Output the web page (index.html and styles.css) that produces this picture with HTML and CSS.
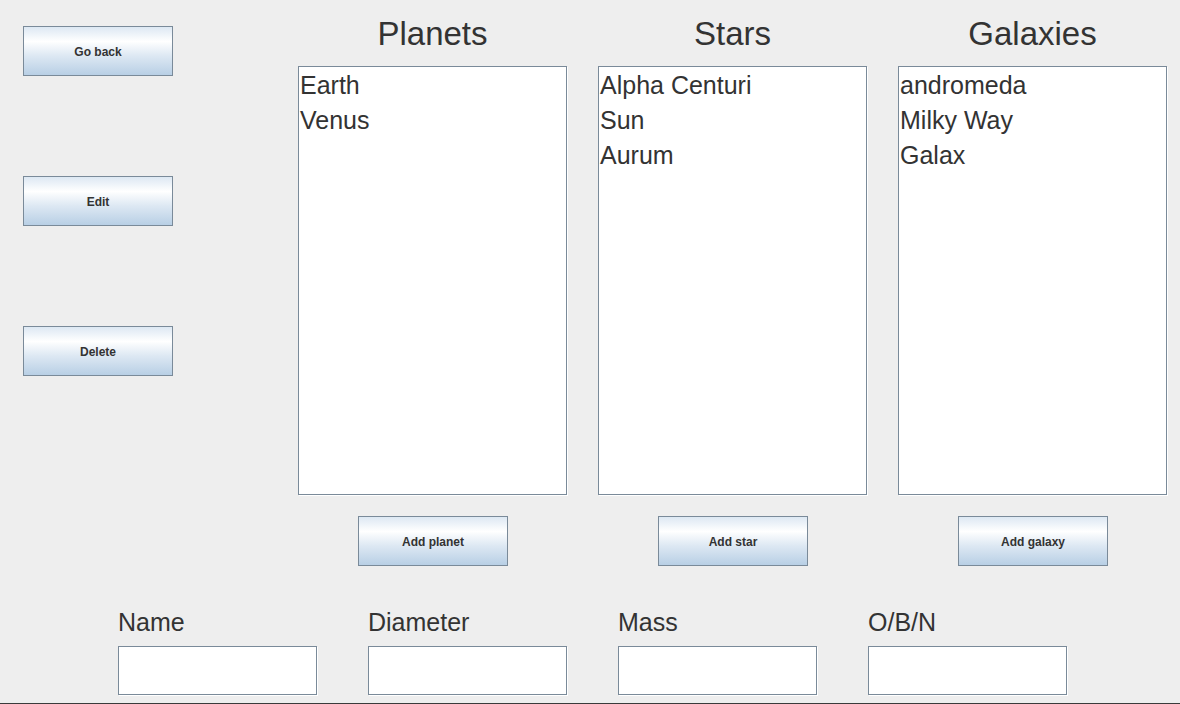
FILE: index.html
```html
<!DOCTYPE html>
<html>
<head>
<meta charset="utf-8">
<link rel="stylesheet" href="styles.css">
</head>
<body>
<div class="app">
  <div class="top">
    <div class="sidebar">
      <button class="btn">Go back</button>
      <button class="btn">Edit</button>
      <button class="btn">Delete</button>
    </div>
    <div class="columns">
      <div class="column">
        <h2 class="heading">Planets</h2>
        <ul class="list">
          <li>Earth</li>
          <li>Venus</li>
        </ul>
        <button class="btn add">Add planet</button>
      </div>
      <div class="column">
        <h2 class="heading">Stars</h2>
        <ul class="list">
          <li>Alpha Centuri</li>
          <li>Sun</li>
          <li>Aurum</li>
        </ul>
        <button class="btn add">Add star</button>
      </div>
      <div class="column">
        <h2 class="heading">Galaxies</h2>
        <ul class="list">
          <li>andromeda</li>
          <li>Milky Way</li>
          <li>Galax</li>
        </ul>
        <button class="btn add">Add galaxy</button>
      </div>
    </div>
  </div>
  <div class="fields">
    <label class="field"><span class="label">Name</span><input class="input" type="text"></label>
    <label class="field"><span class="label">Diameter</span><input class="input" type="text"></label>
    <label class="field"><span class="label">Mass</span><input class="input" type="text"></label>
    <label class="field"><span class="label">O/B/N</span><input class="input" type="text"></label>
  </div>
</div>
</body>
</html>
```
FILE: styles.css
```css
html, body {
  margin: 0;
  padding: 0;
  background: #eeeeee;
}
body {
  font-family: "Liberation Sans", Arial, sans-serif;
  color: #333333;
}
.app {
  box-sizing: border-box;
  width: 1180px;
  height: 704px;
  border-bottom: 1px solid #3a3a3a;
  overflow: hidden;
}
.top {
  display: flex;
}
.sidebar {
  width: 275px;
  padding-left: 23px;
  padding-top: 26px;
  display: flex;
  flex-direction: column;
  align-items: flex-start;
  gap: 100px;
}
.btn {
  box-sizing: border-box;
  width: 150px;
  height: 50px;
  margin: 0;
  padding: 2px 0 0;
  border: 1px solid #7a8a99;
  background: linear-gradient(to bottom, #dde8f3 0%, #ffffff 30%, #dde8f3 60%, #b8cfe5 100%);
  font-family: "Liberation Sans", Arial, sans-serif;
  font-weight: bold;
  font-size: 12px;
  color: #333333;
}
.columns {
  display: flex;
  gap: 31px;
}
.column {
  width: 269px;
  display: flex;
  flex-direction: column;
  align-items: center;
}
.heading {
  margin: 18px 0 0;
  height: 32px;
  line-height: 32px;
  font-size: 33px;
  font-weight: normal;
  text-align: center;
}
.list {
  box-sizing: border-box;
  align-self: stretch;
  width: 269px;
  height: 429px;
  margin: 16px 0 0;
  padding: 1px 0 0 1px;
  list-style: none;
  background: #ffffff;
  border: 1px solid #7a8a99;
  box-shadow: 1px 1px 0 #ffffff;
}
.list li {
  font-size: 25px;
  line-height: 35px;
}
.add {
  margin-top: 21px;
  margin-left: 1px;
}
.fields {
  display: flex;
  gap: 51px;
  padding-left: 118px;
  margin-top: 41px;
}
.field {
  display: flex;
  flex-direction: column;
  gap: 9px;
}
.label {
  font-size: 25px;
  line-height: 30px;
  height: 30px;
}
.input {
  box-sizing: border-box;
  width: 199px;
  height: 49px;
  margin: 0;
  border: 1px solid #7a8a99;
  box-shadow: 1px 1px 0 #ffffff;
  background: #ffffff;
  outline: none;
}
```
